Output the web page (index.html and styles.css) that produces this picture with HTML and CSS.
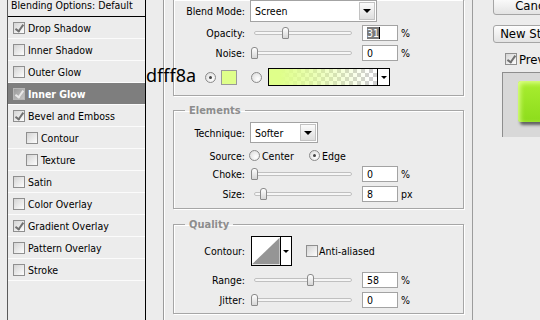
FILE: index.html
```html
<!DOCTYPE html>
<html lang="en">
<head>
    <meta charset="UTF-8">
    <title>Layer Style - Inner Glow</title>
    <link rel="stylesheet" href="styles.css">
</head>
<body>

    <div class="dialog">
        <div class="styles-list">
            <div class="list-head">Blending Options: Default</div>
            <div class="list-row"><span class="cb on"></span>Drop Shadow</div>
            <div class="list-row"><span class="cb"></span>Inner Shadow</div>
            <div class="list-row"><span class="cb"></span>Outer Glow</div>
            <div class="list-row active"><span class="cb on"></span>Inner Glow</div>
            <div class="list-row"><span class="cb on"></span>Bevel and Emboss</div>
            <div class="list-row sub"><span class="cb"></span>Contour</div>
            <div class="list-row sub"><span class="cb"></span>Texture</div>
            <div class="list-row"><span class="cb"></span>Satin</div>
            <div class="list-row"><span class="cb"></span>Color Overlay</div>
            <div class="list-row"><span class="cb on"></span>Gradient Overlay</div>
            <div class="list-row"><span class="cb"></span>Pattern Overlay</div>
            <div class="list-row"><span class="cb"></span>Stroke</div>
        </div>

        <div class="settings">
            <!-- Structure -->
            <div class="group structure">
                <div class="row tall">
                    <span class="lbl">Blend Mode:</span>
                    <div class="select blend"><span class="val">Screen</span><span class="drop"></span></div>
                </div>
                <div class="row opacity">
                    <span class="lbl">Opacity:</span>
                    <div class="slider"><div class="track"></div><div class="thumb" style="left: 32px"></div></div>
                    <div class="num"><span class="picked">31</span><span class="caret"></span></div>
                    <span class="unit">%</span>
                </div>
                <div class="row">
                    <span class="lbl">Noise:</span>
                    <div class="slider"><div class="track"></div><div class="thumb" style="left: 1px"></div></div>
                    <div class="num">0</div>
                    <span class="unit">%</span>
                </div>
                <div class="row color-row">
                    <span class="radio on"></span>
                    <span class="swatch"></span>
                    <span class="radio"></span>
                    <div class="gradient"><span class="ramp"></span><span class="drop small"></span></div>
                </div>
            </div>

            <!-- Elements -->
            <fieldset class="group elements">
                <legend>Elements</legend>
                <div class="row tall technique">
                    <span class="lbl">Technique:</span>
                    <div class="select soft"><span class="val">Softer</span><span class="drop"></span></div>
                </div>
                <div class="row source">
                    <span class="lbl">Source:</span>
                    <span class="opt first"><span class="radio"></span>Center</span>
                    <span class="opt"><span class="radio on"></span>Edge</span>
                </div>
                <div class="row choke">
                    <span class="lbl">Choke:</span>
                    <div class="slider"><div class="track"></div><div class="thumb" style="left: 1px"></div></div>
                    <div class="num">0</div>
                    <span class="unit">%</span>
                </div>
                <div class="row">
                    <span class="lbl">Size:</span>
                    <div class="slider"><div class="track"></div><div class="thumb" style="left: 10px"></div></div>
                    <div class="num">8</div>
                    <span class="unit">px</span>
                </div>
            </fieldset>

            <!-- Quality -->
            <fieldset class="group quality">
                <legend>Quality</legend>
                <div class="row contour-row">
                    <span class="lbl">Contour:</span>
                    <div class="contour">
                        <svg class="curve" width="29" height="28" viewBox="0 0 29 28">
                            <polygon points="0,28 29,0 29,28" fill="#959595"/>
                        </svg>
                        <span class="drop small"></span>
                    </div>
                    <span class="cb aa"></span>Anti-aliased
                </div>
                <div class="row range">
                    <span class="lbl">Range:</span>
                    <div class="slider"><div class="track"></div><div class="thumb" style="left: 57px"></div></div>
                    <div class="num">58</div>
                    <span class="unit">%</span>
                </div>
                <div class="row">
                    <span class="lbl">Jitter:</span>
                    <div class="slider"><div class="track"></div><div class="thumb" style="left: 1px"></div></div>
                    <div class="num">0</div>
                    <span class="unit">%</span>
                </div>
            </fieldset>
        </div>

        <div class="side">
            <div class="btn cancel">Cancel</div>
            <div class="btn">New Style...</div>
            <div class="preview-check"><span class="cb on"></span>Preview</div>
            <div class="preview-box"><div class="sample"></div></div>
        </div>
    </div>

    <div class="hex">dfff8a</div>

</body>
</html>
```

FILE: styles.css
```css
* {
    box-sizing: border-box;
}
body {
    margin: 0;
    height: 320px;
    overflow: hidden;
    position: relative;
    background-color: #ececec;
    font-family: "DejaVu Sans Condensed", "DejaVu Sans", sans-serif;
    font-size: 10.5px;
    color: #000;
}
.dialog {
    display: flex;
    height: 320px;
    padding-left: 7px;
}

/* left list of styles */
.styles-list {
    flex: none;
    width: 139px;
    border-left: 1px solid #5a5a5a;
    border-right: 1px solid #000;
}
.list-head {
    height: 17px;
    line-height: 11px;
    padding-left: 3px;
    border-bottom: 1px solid #000;
}
.list-row {
    display: flex;
    align-items: center;
    height: 22px;
    padding-left: 5px;
    border-bottom: 1px solid #fbfbfb;
}
.list-row.sub {
    padding-left: 18px;
}
.list-row.active {
    background-color: #7e7e7e;
    color: #fff;
    font-weight: bold;
}
.cb {
    position: relative;
    flex: none;
    width: 12px;
    height: 12px;
    margin-right: 3px;
    border: 1px solid #8f8f8f;
    background: linear-gradient(135deg, #d4d4d4, #fdfdfd);
}
.cb.on::after {
    content: "";
    position: absolute;
    left: 3px;
    top: 0;
    width: 3px;
    height: 7px;
    border: solid #707070;
    border-width: 0 2px 2px 0;
    transform: rotate(35deg);
}
.active .cb {
    border-color: #b5b5b5;
    background: linear-gradient(135deg, #9a9a9a, #c4c4c4);
}
.active .cb.on::after {
    border-color: #e8e8e8;
}

/* middle settings frame */
.settings {
    flex: none;
    width: 310px;
    margin-left: 17px;
    padding: 0 8px 0 9px;
    border-left: 1px solid #9c9c9c;
    border-right: 1px solid #9c9c9c;
    box-shadow: inset 1px 0 0 #fff;
}
.group {
    margin: 0;
    padding: 0;
    min-width: 0;
    border: 1px solid #a6a6a6;
    box-shadow: inset 1px 1px 0 #fff, 1px 1px 0 #fff;
}
.group legend {
    margin-left: 11px;
    padding: 0 4px;
    line-height: 13px;
    font-size: 11px;
    font-weight: bold;
    color: #8d8d8d;
}
.structure {
    border-top: none;
    padding-bottom: 9px;
}
.elements {
    margin-top: 8px;
    padding-bottom: 6px;
}
.quality {
    margin-top: 9px;
    padding-bottom: 5px;
}
.row {
    display: flex;
    align-items: center;
    height: 16px;
    margin-top: 4px;
}
.row.tall {
    height: 22px;
    margin-top: 0;
}
.row.opacity {
    margin-top: 3px;
}
.lbl {
    flex: none;
    width: 71px;
    margin-right: 5px;
    text-align: right;
}
.unit {
    margin-left: 3px;
}

/* dropdowns */
.select {
    display: flex;
    height: 22px;
    border: 1px solid #a3a3a3;
    background-color: #fff;
}
.select.blend {
    width: 127px;
}
.select.soft {
    width: 68px;
    height: 21px;
}
.select .val {
    flex: 1;
    display: flex;
    align-items: center;
    padding-left: 4px;
}
.drop {
    display: flex;
    align-items: center;
    justify-content: center;
    width: 16px;
    margin: 1px;
    border: 1px solid #c2c2c2;
    background: linear-gradient(#fbfbfb, #dedede);
}
.drop::before {
    content: "";
    border-left: 4px solid transparent;
    border-right: 4px solid transparent;
    border-top: 4px solid #000;
}
.drop.small {
    width: 12px;
    margin: 0;
    border: none;
    border-left: 1px solid #000;
    background: #fff;
}
.drop.small::before {
    border-left-width: 3px;
    border-right-width: 3px;
    border-top-width: 3px;
}

/* sliders and number fields */
.slider {
    position: relative;
    flex: none;
    width: 102px;
    height: 12px;
    margin-right: 10px;
}
.track {
    position: absolute;
    left: 4px;
    right: 0;
    top: 4px;
    height: 4px;
    border: 1px solid #c0c0c0;
    border-radius: 2px;
    background-color: #f6f6f6;
}
.thumb {
    position: absolute;
    top: 0;
    width: 7px;
    height: 12px;
    border: 1px solid #8a8a8a;
    border-radius: 3px 3px 1px 1px;
    background: linear-gradient(#fff, #d6d6d6);
}
.num {
    display: flex;
    align-items: center;
    flex: none;
    width: 36px;
    height: 16px;
    padding-left: 4px;
    border: 1px solid #a3a3a3;
    background-color: #fff;
}
.picked {
    background-color: #7b7b7b;
    color: #fff;
    line-height: 12px;
}
.caret {
    width: 1px;
    height: 12px;
    background-color: #000;
}

/* color row */
.color-row {
    height: 18px;
    margin-top: 7px;
    padding-left: 31px;
}
.radio {
    position: relative;
    flex: none;
    width: 11px;
    height: 11px;
    border-radius: 50%;
    border: 1px solid #8a8a8a;
    background: radial-gradient(circle at 65% 65%, #fff, #d8d8d8);
}
.radio.on::after {
    content: "";
    position: absolute;
    left: 3px;
    top: 3px;
    width: 3px;
    height: 3px;
    border-radius: 50%;
    background-color: #444;
}
.color-row .radio {
    margin-right: 5px;
}
.swatch {
    flex: none;
    width: 16px;
    height: 15px;
    margin-right: 14px;
    border: 1px solid #9a9a9a;
    background-color: #dfff8a;
}
.color-row .radio + .gradient {
    margin-left: 1px;
}
.gradient {
    display: flex;
    width: 122px;
    height: 18px;
    border: 1px solid #000;
    background-color: #fff;
}
.ramp {
    flex: 1;
    background:
        linear-gradient(to right, #dfff8a 10%, rgba(223, 255, 138, 0) 95%),
        repeating-conic-gradient(#d0d0d0 0 25%, #fff 0 50%) 0 0 / 8px 8px;
}

/* source radios */
.row.source {
    height: 13px;
    margin-top: 6px;
}
.opt {
    display: flex;
    align-items: center;
    gap: 2px;
}
.opt.first {
    width: 60px;
    margin-left: -1px;
}
.row.technique {
    margin-top: 5px;
    height: 21px;
}
.row.choke {
    margin-top: 4px;
}

/* contour */
.row.contour-row {
    height: 30px;
    margin-top: 5px;
}
.contour {
    display: flex;
    width: 41px;
    height: 30px;
    margin-left: 1px;
    border: 1px solid #000;
    background-color: #fff;
}
.curve {
    display: block;
}
.cb.aa {
    margin-left: 14px;
    margin-right: 1px;
}
.row.range {
    margin-top: 6px;
}

/* right side */
.side {
    flex: none;
    width: 120px;
    padding-left: 20px;
}
.btn {
    width: 84px;
    height: 18px;
    line-height: 16px;
    margin-top: 10px;
    text-align: center;
    font-size: 13px;
    border: 1px solid #a5a5a5;
    border-radius: 3px;
    background: linear-gradient(#fdfdfd, #e3e3e3);
}
.btn.cancel {
    margin-top: -3px;
}
.preview-check {
    display: flex;
    align-items: center;
    height: 12px;
    margin-top: 10px;
    padding-left: 12px;
    font-size: 13px;
}
.preview-check .cb {
    margin-right: 2px;
}
.preview-box {
    width: 80px;
    height: 65px;
    margin-top: 7px;
    margin-left: 9px;
    padding: 8px 0 0 15px;
    border-left: 1px solid #8e8e8e;
    border-top: 1px solid #8e8e8e;
    background-color: #d8d8d8;
}
.sample {
    width: 70px;
    height: 41px;
    border-radius: 3px;
    background: linear-gradient(#a9ee30, #8ddc1c);
    box-shadow: inset 2px 2px 5px #dfff8a, 2px 3px 3px rgba(0, 0, 0, 0.55);
}

/* color code note over the dialog */
.hex {
    position: absolute;
    left: 146px;
    top: 63px;
    font-family: "Noto Sans", sans-serif;
    font-size: 18px;
    line-height: 24px;
    color: #000;
}
```
